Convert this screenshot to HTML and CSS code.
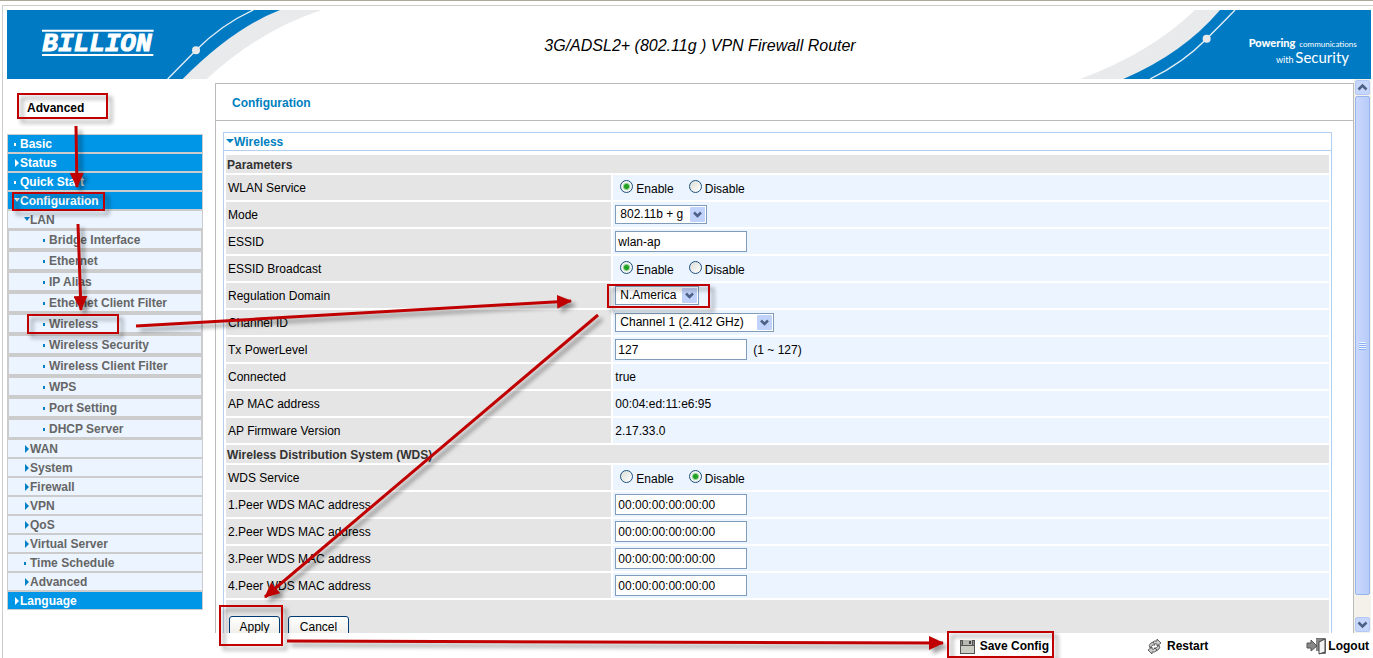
FILE: index.html
```html
<!DOCTYPE html>
<html lang="en">
<head>
<meta charset="utf-8">
<title>3G/ADSL2+ (802.11g ) VPN Firewall Router</title>
<link rel="stylesheet" href="styles.css">
</head>
<body>
<div class="page">
  <header class="banner">
    <svg class="banner-art banner-left" viewBox="21 30 999 207" preserveAspectRatio="none" role="img" aria-label="Billion">
      <path d="M21 30H965Q780 90 620 237H21Z" fill="#e9eaec"/>
      <path d="M21 30H840Q700 84 548 237H21Z" fill="#007bc3"/>
      <path d="M760 30C695 60 640 98 588 151L503 237" fill="none" stroke="#e6f0f8" stroke-width="4"/>
      <circle cx="588" cy="151" r="12" fill="#e9eaec"/>
      <path d="M126 92H461M126 165H460" stroke="#fff" stroke-width="6"/>
      <text class="logo-text" x="127" y="153">BILLION</text>
    </svg>
    <h1 class="model">3G/ADSL2+ (802.11g ) VPN Firewall Router</h1>
    <svg class="banner-art banner-right" viewBox="0 30 903 207" preserveAspectRatio="none">
      <path d="M903 30H375Q240 160 30 237H903Z" fill="#e9eaec"/>
      <path d="M903 30H450Q340 160 160 237H903Z" fill="#007bc3"/>
      <path d="M495 30Q455 72 410 116Q340 188 240 237" fill="none" stroke="#e6f0f8" stroke-width="4"/>
      <circle cx="410" cy="116" r="12" fill="#e9eaec"/>
      <text class="slogan slogan-bold" x="536" y="141">Powering</text>
      <text class="slogan slogan-small" x="688" y="141">communications</text>
      <text class="slogan slogan-mid" x="618" y="189">with</text>
      <text class="slogan slogan-big" x="676" y="189">Security</text>
    </svg>
  </header>

  <div class="body">
    <aside class="sidebar">
      <div class="mode-name">Advanced</div>
      <nav class="menu">
        <a class="item top dot" href="#">Basic</a>
        <a class="item top right" href="#">Status</a>
        <a class="item top dot" href="#">Quick Start</a>
        <a class="item top down" href="#">Configuration</a>
        <a class="item mid down" href="#">LAN</a>
        <div class="submenu">
          <a class="item sub dot" href="#">Bridge Interface</a>
          <a class="item sub dot" href="#">Ethernet</a>
          <a class="item sub dot" href="#">IP Alias</a>
          <a class="item sub dot" href="#">Ethernet Client Filter</a>
          <a class="item sub dot" href="#">Wireless</a>
          <a class="item sub dot" href="#">Wireless Security</a>
          <a class="item sub dot" href="#">Wireless Client Filter</a>
          <a class="item sub dot" href="#">WPS</a>
          <a class="item sub dot" href="#">Port Setting</a>
          <a class="item sub dot" href="#">DHCP Server</a>
        </div>
        <a class="item mid right" href="#">WAN</a>
        <a class="item mid right" href="#">System</a>
        <a class="item mid right" href="#">Firewall</a>
        <a class="item mid right" href="#">VPN</a>
        <a class="item mid right" href="#">QoS</a>
        <a class="item mid right" href="#">Virtual Server</a>
        <a class="item mid dot" href="#">Time Schedule</a>
        <a class="item mid right" href="#">Advanced</a>
        <a class="item top right" href="#">Language</a>
      </nav>
    </aside>

    <main class="content">
      <h2 class="crumb">Configuration</h2>
      <form class="panel">
        <h3 class="panel-title">Wireless</h3>
        <div class="panel-body">
          <table class="settings">
            <colgroup><col class="col-label"><col></colgroup>
            <tbody>
            <tr><th class="section" colspan="2">Parameters</th></tr>
            <tr><td>WLAN Service</td><td>
              <div class="radios"><label><input type="radio" name="wlan" checked><span>Enable</span></label><label><input type="radio" name="wlan"><span>Disable</span></label></div></td></tr>
            <tr><td><label for="mode">Mode</label></td><td>
              <span class="select w-mode"><select id="mode"><option>802.11b + g</option></select><svg class="drop" viewBox="0 0 15 15"><rect width="15" height="15" rx="1"/><path d="M4 5.500L7.500 9L11 5.500"/></svg></span></td></tr>
            <tr><td><label for="essid">ESSID</label></td><td><input class="text" id="essid" type="text" value="wlan-ap"></td></tr>
            <tr><td>ESSID Broadcast</td><td>
              <div class="radios"><label><input type="radio" name="bcast" checked><span>Enable</span></label><label><input type="radio" name="bcast"><span>Disable</span></label></div></td></tr>
            <tr><td><label for="domain">Regulation Domain</label></td><td>
              <span class="select w-domain"><select id="domain"><option>N.America</option></select><svg class="drop" viewBox="0 0 15 15"><rect width="15" height="15" rx="1"/><path d="M4 5.500L7.500 9L11 5.500"/></svg></span></td></tr>
            <tr><td><label for="channel">Channel ID</label></td><td>
              <span class="select w-channel"><select id="channel"><option>Channel 1 (2.412 GHz)</option></select><svg class="drop" viewBox="0 0 15 15"><rect width="15" height="15" rx="1"/><path d="M4 5.500L7.500 9L11 5.500"/></svg></span></td></tr>
            <tr><td><label for="power">Tx PowerLevel</label></td><td><div class="with-hint"><input class="text" id="power" type="text" value="127"><span>(1 ~ 127)</span></div></td></tr>
            <tr><td>Connected</td><td class="plain">true</td></tr>
            <tr><td>AP MAC address</td><td class="plain">00:04:ed:11:e6:95</td></tr>
            <tr><td>AP Firmware Version</td><td class="plain">2.17.33.0</td></tr>
            <tr><th class="section" colspan="2">Wireless Distribution System (WDS)</th></tr>
            <tr><td>WDS Service</td><td>
              <div class="radios"><label><input type="radio" name="wds"><span>Enable</span></label><label><input type="radio" name="wds" checked><span>Disable</span></label></div></td></tr>
            <tr><td><label for="peer1">1.Peer WDS MAC address</label></td><td><input class="text" id="peer1" type="text" value="00:00:00:00:00:00"></td></tr>
            <tr><td><label for="peer2">2.Peer WDS MAC address</label></td><td><input class="text" id="peer2" type="text" value="00:00:00:00:00:00"></td></tr>
            <tr><td><label for="peer3">3.Peer WDS MAC address</label></td><td><input class="text" id="peer3" type="text" value="00:00:00:00:00:00"></td></tr>
            <tr><td><label for="peer4">4.Peer WDS MAC address</label></td><td><input class="text" id="peer4" type="text" value="00:00:00:00:00:00"></td></tr>
            <tr><td class="actions" colspan="2"><div class="action-row"><button class="btn" type="button">Apply</button><button class="btn btn-wide" type="button">Cancel</button></div></td></tr>
            </tbody>
          </table>
        </div>
      </form>
    </main>

    <div class="scrollbar">
      <button class="scroll-btn" type="button" aria-label="Scroll up"><svg viewBox="0 0 13 13"><path d="M2.500 8.500L6.500 4.500L10.500 8.500"/></svg></button>
      <div class="track"><div class="thumb"><span class="grip"></span></div></div>
      <button class="scroll-btn" type="button" aria-label="Scroll down"><svg viewBox="0 0 13 13"><path d="M2.500 4.500L6.500 8.500L10.500 4.500"/></svg></button>
    </div>
  </div>

  <footer class="tools">
    <a class="tool" href="#">
      <svg width="15" height="14" viewBox="0 0 15 14"><path d="M0 0H15V14H0Z" fill="#555"/><path d="M3 0H12V5H3Z" fill="#b9b9b4"/><path d="M9 1H11V4H9Z" fill="#444"/><path d="M1 6H14V13H1Z" fill="#c9cdc4"/><path d="M1 1H2V5H1ZM13 1H14V5H13Z" fill="#888"/></svg>
      <span>Save Config</span></a>
    <a class="tool" href="#">
      <svg width="15" height="15" viewBox="0 0 15 15" fill="#ccc" stroke="#444" stroke-width=".8" stroke-linejoin="round"><path d="M5 4Q7 1 10 2L10 0L14 4L10 7L10 5Q8 4 7 6Z"/><path d="M12 6Q14 9 11 11L9 12L7 9L9 9Q11 8 11 7Z"/><path d="M10 11Q8 14 5 13L5 15L1 11L5 8L5 10Q7 11 8 9Z"/><path d="M3 9Q1 6 4 4L6 3L8 6L6 6Q4 7 4 8Z"/></svg>
      <span>Restart</span></a>
    <a class="tool tool-tight" href="#">
      <svg width="20" height="17" viewBox="0 0 20 17"><path d="M10 1H19V15H13" fill="#fff" stroke="#444" stroke-width="1.500"/><path d="M10 1H16V13H10Z" fill="#888"/><path d="M13 4L19 1V14L13 16Z" fill="#f2f2f2" stroke="#444"/><path d="M1 5H5V2L11 8L5 13V10H1Z" fill="#888" stroke="#555"/></svg>
      <span>Logout</span></a>
  </footer>

  <svg class="callouts" width="1373" height="658" viewBox="0 0 1373 658" aria-hidden="true">
    <defs><marker id="head" viewBox="0 0 15 14" refX="14" refY="7" markerWidth="15" markerHeight="14" markerUnits="userSpaceOnUse" orient="auto"><path d="M0 0L15 7L0 14Z" fill="#c00000"/></marker></defs>
    <g class="marks">
      <rect x="18" y="94" width="89" height="24"/>
      <rect x="13" y="193" width="91" height="17"/>
      <rect x="28" y="315" width="90" height="18"/>
      <rect x="608" y="285" width="101" height="22"/>
      <rect x="220" y="606" width="62" height="39"/>
      <rect x="948" y="632" width="105" height="25"/>
      <g class="arrows">
        <path d="M76 126L77 187" marker-end="url(#head)"/>
        <path d="M78 224L81 310" marker-end="url(#head)"/>
        <path d="M136 326L571 301" marker-end="url(#head)"/>
        <path d="M598 315L265 597" marker-end="url(#head)"/>
        <path d="M287 641L943 643" marker-end="url(#head)"/>
      </g>
    </g>
  </svg>
</div>
</body>
</html>
```
FILE: styles.css
```css
* { box-sizing: border-box; }
body {
  margin: 0;
  background: #fff;
  color: #000;
  font: 12px/15px "Liberation Sans", Arial, sans-serif;
}
a { color: inherit; text-decoration: none; }
h1, h2, h3 { margin: 0; font-size: 12px; }
input, select, button { font: inherit; color: inherit; margin: 0; }

.page {
  position: relative;
  height: 100vh;
  display: flex;
  flex-direction: column;
  overflow: hidden;
  padding: 4px 0 0 2px;
  border-top: 1px solid #aca899;
}
.banner {
  display: flex;
  align-items: center;
  padding: 4px 2px 0 4px;
  border-top: 1px solid #ccc;
  border-left: 1px solid #ccc;
}
.banner-art { display: block; height: 69px; flex: none; }
.banner-left { width: 333px; }
.banner-right { width: 301px; }
.model {
  flex: 1;
  text-align: center;
  font-size: 16px;
  line-height: 20px;
  font-weight: 400;
  font-style: italic;
  padding: 2px 10px 0 0;
}
.logo-text {
  font: italic bold 78px "Liberation Mono", monospace;
  fill: #fff;
  stroke: #fff;
  stroke-width: 3px;
}
.slogan { font-family: Lato, sans-serif; fill: #fff; }
.slogan-bold { font-size: 33px; font-weight: 900; }
.slogan-small { font-size: 24px; }
.slogan-mid { font-size: 27px; }
.slogan-big { font-size: 45px; }

.body {
  flex: 1;
  min-height: 0;
  display: flex;
  border-left: 1px solid #ccc;
  padding: 0 2px 0 4px;
}
.sidebar { width: 196px; flex: none; padding-top: 22px; font-weight: 700; }
.mode-name { padding-left: 20px; }
.menu {
  display: flex;
  flex-direction: column;
  gap: 2px;
  margin-top: 18px;
  padding: 1px;
  background: #ccc;
}
.submenu { display: flex; flex-direction: column; gap: 4px; padding: 1px; }
.item { display: flex; align-items: center; height: 17px; padding-top: 2px; }
.item::before { content: ""; flex: none; }
.top { background: #0096e8; color: #fff; padding-left: 6px; --mark: #fff; }
.mid { background: #ebf4ff; color: #666; padding-left: 16px; --mark: #0080c8; }
.sub { background: #ebf4ff; color: #666; padding-left: 34px; --mark: #0080c8; }
.dot::before { width: 2px; height: 3px; margin: 0 4px 0 0; background: var(--mark); }
.right::before {
  margin: 0 1px 2px 1px;
  border: 4px solid transparent;
  border-left-color: var(--mark);
  border-right-width: 0;
}
.down::before {
  margin: 0 0 3px;
  border: 3px solid transparent;
  border-top: 4px solid var(--mark);
  border-bottom-width: 0;
}

.content {
  flex: 1;
  min-width: 0;
  overflow: hidden;
  margin: 4px 0 0 12px;
  border: solid #bbb;
  border-width: 1px 1px 0;
}
.crumb { padding: 12px 16px 9px; border-bottom: 1px solid #bbb; color: #0080c0; }
.panel { margin: 11px 21px 0 7px; border: 1px solid #b4d0f0; }
.panel-title {
  display: flex;
  align-items: center;
  padding: 2px 2px 0;
  border-bottom: 1px solid #b4d0f0;
  color: #0080c0;
  height: 18px;
}
.panel-title::before {
  content: "";
  border: 4px solid transparent;
  border-top-color: #0080c0;
  border-bottom-width: 0;
  margin-bottom: 4px;
}
.panel-body { padding-top: 2px; }
.settings { width: 100%; table-layout: fixed; border-collapse: separate; border-spacing: 2px; }
.col-label { width: 35%; }
.settings td { height: 25px; padding: 0 2px; background: #ebf4ff; }
.settings td:first-child, .settings .section { background: #e5e5e5; }
.settings td:first-child, .settings .plain { padding-top: 2px; }
.settings .section { height: 18px; padding: 2px 1px 0; text-align: left; color: #333; }
.text {
  display: block;
  width: 132px;
  height: 21px;
  padding: 0 2px;
  border: 1px solid #7f9db9;
  background: #fff;
}
.with-hint { display: flex; align-items: center; gap: 6px; }
.with-hint span { padding-top: 2px; }
.radios { display: flex; gap: 15px; padding-left: 5px; }
.radios label { display: flex; align-items: flex-start; gap: 3px; }
.radios span { padding-top: 4px; }
.radios input {
  appearance: none;
  width: 13px;
  height: 13px;
  margin-top: 2px;
  border: 1px solid #1c5180;
  border-radius: 50%;
  background: linear-gradient(135deg, #dcdcd7, #fff);
}
.radios input:checked { background: radial-gradient(circle, #21a121 0 2px, #8fd08f 3px, #f2f2ef 4px); }
.select { position: relative; display: block; height: 19px; }
.select select {
  appearance: none;
  display: block;
  width: 100%;
  height: 19px;
  padding: 0 4px;
  border: 1px solid #7f9db9;
  border-radius: 0;
  background: #fff;
}
.w-mode { width: 92px; }
.w-domain { width: 84px; }
.w-channel { width: 159px; }
.drop { position: absolute; top: 2px; right: 2px; width: 15px; height: 15px; pointer-events: none; }
.drop rect { fill: #c1d3fb; }
.drop path, .scroll-btn path { fill: none; stroke: #4d6185; stroke-width: 2.5; }
.settings .actions:first-child { height: 48px; vertical-align: top; padding: 16px 3px 0; }
.action-row { display: flex; gap: 8px; }
.btn {
  width: 51px;
  height: 22px;
  padding: 0;
  border: 1px solid #003c74;
  border-radius: 3px;
  background: linear-gradient(#fff, #ecebe5);
}
.btn-wide { width: 61px; }

.scrollbar {
  width: 17px;
  flex: none;
  display: flex;
  flex-direction: column;
  gap: 1px;
  padding: 1px;
  background: #f3f1ea;
}
.scroll-btn {
  height: 15px;
  padding: 0;
  border: 1px solid #b4c8f6;
  border-radius: 2px;
  background: #c6d6fd;
}
.scroll-btn svg { display: block; width: 13px; height: 13px; }
.track { flex: 1; display: flex; padding-bottom: 21px; }
.thumb {
  flex: 1;
  display: flex;
  align-items: center;
  justify-content: center;
  border: 1px solid #98b4ec;
  border-radius: 2px;
  background: linear-gradient(90deg, #c9d8fd, #b8cbf9);
}
.grip { width: 7px; height: 8px; background: repeating-linear-gradient(#eef4fe 0 1px, #8cb0f8 1px 2px); }

.tools {
  height: 25px;
  flex: none;
  display: flex;
  justify-content: flex-end;
  align-items: center;
  gap: 98px;
  padding: 2px 4px 0 0;
  border-left: 1px solid #ccc;
  font-weight: 700;
}
.tool { display: flex; align-items: center; gap: 5px; }
.tool-tight { gap: 2px; }
.callouts { position: absolute; left: 0; top: -1px; pointer-events: none; }
.marks { fill: none; stroke: #c00000; stroke-width: 2; filter: drop-shadow(4px 4px 2px rgba(0, 0, 0, 0.4)); }
#head path { stroke: none; }
.arrows { stroke-width: 3; }
```
